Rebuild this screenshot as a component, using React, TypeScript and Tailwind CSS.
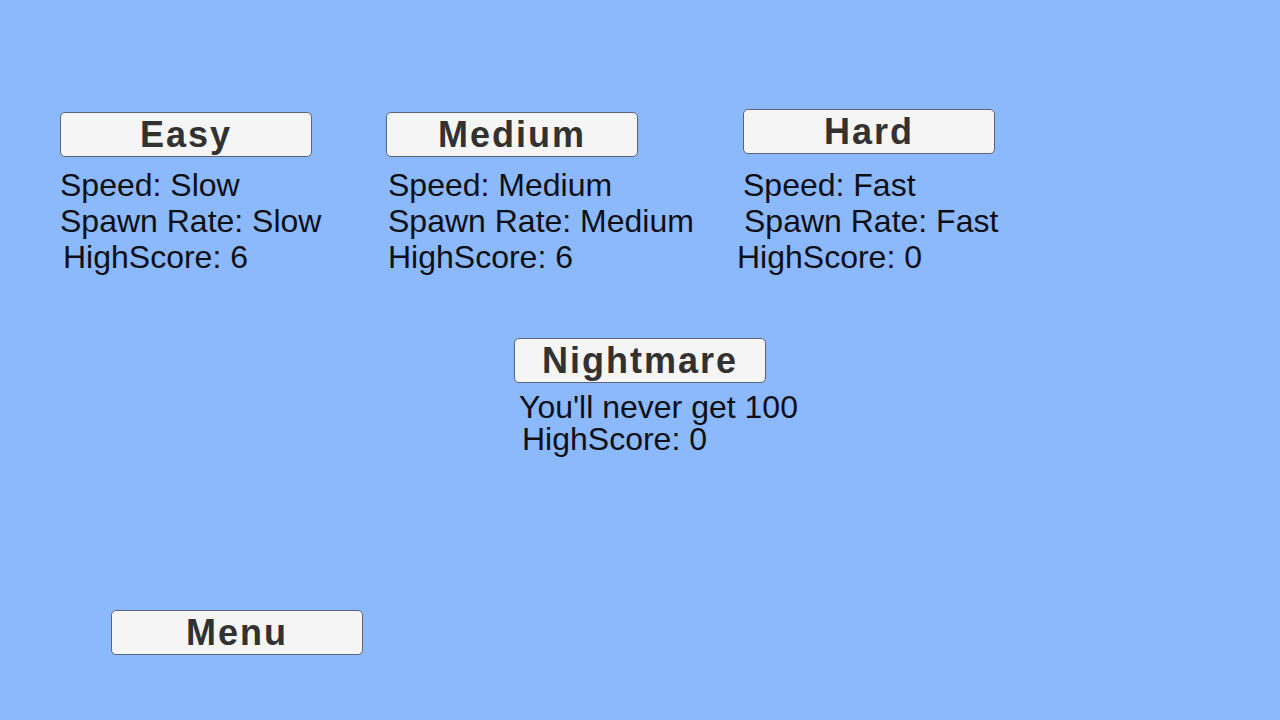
const labelFont = "font-['Liberation_Sans',Arial,sans-serif]";

function MenuButton({ label }: { label: string }) {
  return (
    <button
      type="button"
      className={`${labelFont} flex h-[45px] w-[252px] items-center justify-center rounded-[5px] border border-[#5a6577] bg-[#f5f5f5] pt-[1px] text-[36px] font-bold tracking-[2px] text-[#323232]`}
    >
      {label}
    </button>
  );
}

type Mode = {
  name: string;
  lines: { text: string; shift: string }[];
  offset: string;
  top: string;
  gap: string;
};

const modes: Mode[] = [
  {
    name: "Easy",
    offset: "ml-[60px]",
    top: "mt-[3px]",
    gap: "mt-[10px]",
    lines: [
      { text: "Speed: Slow", shift: "" },
      { text: "Spawn Rate: Slow", shift: "" },
      { text: "HighScore: 6", shift: "ml-[3px]" },
    ],
  },
  {
    name: "Medium",
    offset: "ml-[74px]",
    top: "mt-[3px]",
    gap: "mt-[10px]",
    lines: [
      { text: "Speed: Medium", shift: "ml-[2px]" },
      { text: "Spawn Rate: Medium", shift: "ml-[2px]" },
      { text: "HighScore: 6", shift: "ml-[2px]" },
    ],
  },
  {
    name: "Hard",
    offset: "ml-[105px]",
    top: "mt-0",
    gap: "mt-[13px]",
    lines: [
      { text: "Speed: Fast", shift: "" },
      { text: "Spawn Rate: Fast", shift: "ml-[1px]" },
      { text: "HighScore: 0", shift: "-ml-[6px]" },
    ],
  },
];

export default function App() {
  return (
    <div className={`${labelFont} flex h-[720px] w-[1280px] flex-col overflow-hidden bg-[#8cb8fc] text-[32px] text-[#0e1016]`}>
      <div className="mt-[109px] flex items-start">
        {modes.map((m) => (
          <div key={m.name} className={`${m.offset} ${m.top} flex w-[252px] flex-col`}>
            <MenuButton label={m.name} />
            <div className={`${m.gap} flex flex-col leading-[36px] whitespace-nowrap`}>
              {m.lines.map((l) => (
                <span key={l.text} className={l.shift}>
                  {l.text}
                </span>
              ))}
            </div>
          </div>
        ))}
      </div>

      <div className="ml-[514px] mt-[63px] flex w-[252px] flex-col">
        <MenuButton label="Nightmare" />
        <div className="mt-[8px] flex flex-col leading-[32px] whitespace-nowrap">
          <span className="ml-[5px]">You'll never get 100</span>
          <span className="ml-[8px]">HighScore: 0</span>
        </div>
      </div>

      <div className="ml-[111px] mt-[155px]">
        <MenuButton label="Menu" />
      </div>
    </div>
  );
}
